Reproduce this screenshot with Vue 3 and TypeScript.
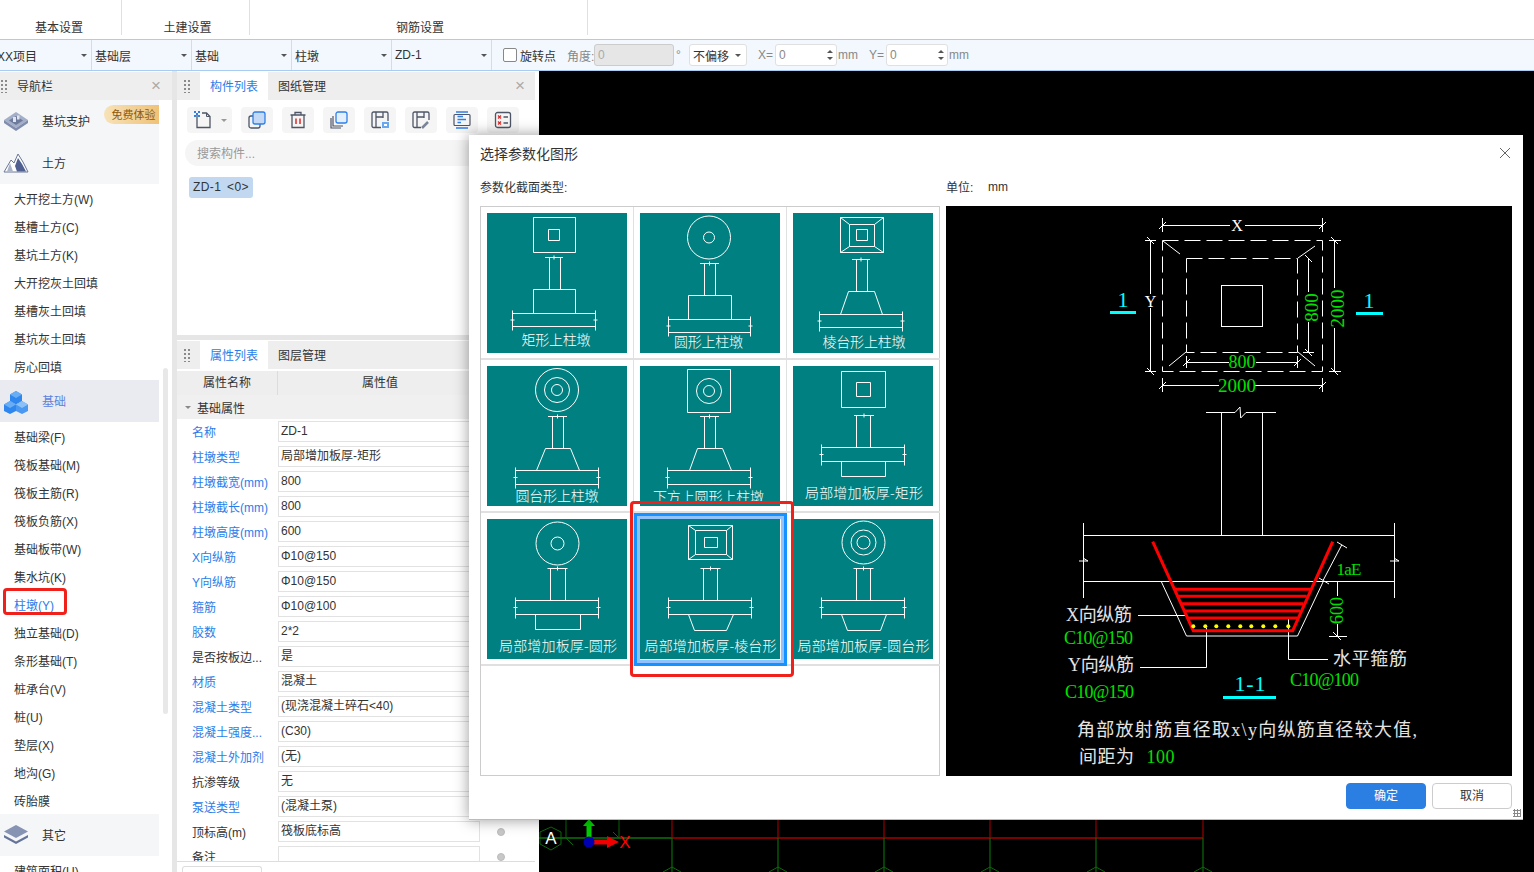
<script setup lang="ts">
interface Thumb {
  label: string
  cx: number
  cy: number
  tw: number
  d: string
  circles: { x: number; y: number; r: number }[]
  cover?: boolean
}

const rect = (x1: number, y1: number, x2: number, y2: number) => `M${x1} ${y1}H${x2}V${y2}H${x1}Z`
const stem = (y: number, tx1: number, tx2: number, c1: number, c2: number, yb: number) =>
  `M${tx1} ${y}H${tx2}M${(tx1 + tx2) / 2} ${y - 2}V${y + 2}M${c1} ${y}V${yb}M${c2} ${y}V${yb}`
const plate = (x1: number, x2: number, y1: number, y2: number) =>
  `${rect(x1, y1, x2, y2)}M${x1} ${y1 - 3}V${y2 + 4}M${x2} ${y1 - 3}V${y2 + 4}M${x1 - 2} ${(y1 + y2) / 2}H${x1 + 2}M${x2 - 2} ${(y1 + y2) / 2}H${x2 + 2}`
const trap = (a: number, b: number, y1: number, c: number, d: number, y2: number) =>
  `M${a} ${y1}H${b}L${d} ${y2}H${c}Z`
const frustum = (x1: number, y1: number, x2: number, y2: number, a: number, b: number, c: number, e: number, ix1: number, iy1: number, ix2: number, iy2: number) =>
  `${rect(x1, y1, x2, y2)}${rect(a, b, c, e)}${rect(ix1, iy1, ix2, iy2)}M${x1} ${y1}L${a} ${b}M${x2} ${y1}L${c} ${b}M${x1} ${y2}L${a} ${e}M${x2} ${y2}L${c} ${e}`

const thumbs: Thumb[] = [
  { label: '矩形上柱墩', cx: 69, cy: 126, tw: 69, circles: [],
    d: rect(46.5, 4.5, 88.5, 39.5) + rect(61.5, 16.5, 72.5, 27.5) + stem(44.5, 58, 76, 62.5, 73.5, 76.5) + rect(46.5, 76.5, 88.5, 100.5) + plate(25.5, 108.5, 100.5, 113.5) },
  { label: '圆形上柱墩', cx: 68.5, cy: 128, tw: 69, circles: [{ x: 69, y: 24.5, r: 21.5 }, { x: 69, y: 24.5, r: 5.5 }],
    d: stem(50.5, 60, 79, 64.5, 75.5, 82.5) + rect(48.5, 82.5, 91.5, 106.5) + plate(28.5, 110.5, 106.5, 119.5) },
  { label: '棱台形上柱墩', cx: 71, cy: 128, tw: 83, circles: [],
    d: frustum(47.5, 4.5, 90.5, 39.5, 56.5, 11.5, 81.5, 33.5, 63.5, 16.5, 74.5, 27.5) + stem(46.5, 59, 77, 63.5, 74.5, 78.5) + trap(55.5, 81.5, 78.5, 47.5, 89.5, 101.5) + plate(26.5, 109.5, 101.5, 114.5) },
  { label: '圆台形上柱墩', cx: 70, cy: 129, tw: 83, circles: [{ x: 70, y: 24, r: 21.5 }, { x: 70, y: 24, r: 12.5 }, { x: 70, y: 24, r: 5.5 }],
    d: stem(50.5, 61, 80, 65.5, 76.5, 82.5) + trap(58.5, 83.5, 82.5, 49.5, 92.5, 104.5) + plate(28.5, 111.5, 104.5, 118.5) },
  { label: '下方上圆形上柱墩', cx: 68.5, cy: 129.5, tw: 111, cover: true, circles: [{ x: 69, y: 25, r: 12.5 }, { x: 69, y: 25, r: 5.5 }],
    d: rect(47.5, 3.5, 90.5, 46.5) + stem(50.5, 60, 79, 64.5, 75.5, 82.5) + trap(57.5, 82.5, 82.5, 49.5, 91.5, 104.5) + plate(27.5, 110.5, 104.5, 118.5) },
  { label: '局部增加板厚-矩形', cx: 71, cy: 125.5, tw: 118, circles: [],
    d: rect(48.5, 5.5, 92.5, 41.5) + rect(63.5, 16.5, 77.5, 30.5) + stem(49.5, 61, 81, 63.5, 77.5, 81.5) + plate(28.5, 111.5, 81.5, 95.5) + rect(48.5, 95.5, 92.5, 110.5) },
  { label: '局部增加板厚-圆形', cx: 71, cy: 125.5, tw: 118, circles: [{ x: 70.5, y: 24.5, r: 21.5 }, { x: 70.5, y: 24.5, r: 6.5 }],
    d: stem(49.5, 60.5, 80.5, 63.5, 78.5, 81.5) + plate(28.5, 111.5, 81.5, 95.5) + rect(48.5, 95.5, 93.5, 110.5) },
  { label: '局部增加板厚-棱台形', cx: 70.5, cy: 125.5, tw: 132, circles: [],
    d: frustum(48.5, 6.5, 92.5, 40.5, 55.5, 11.5, 86.5, 35.5, 64.5, 18.5, 77.5, 28.5) + stem(49.5, 60.5, 80.5, 63.5, 77.5, 81.5) + plate(28.5, 111.5, 81.5, 95.5) + `M48.5 95.5L54.5 111.5H86.5L93.5 95.5` },
  { label: '局部增加板厚-圆台形', cx: 70.5, cy: 125.5, tw: 132, circles: [{ x: 70.5, y: 23.5, r: 21.5 }, { x: 70.5, y: 23.5, r: 12.5 }, { x: 70.5, y: 23.5, r: 6.5 }],
    d: stem(49.5, 60.5, 80.5, 63.5, 77.5, 81.5) + plate(28.5, 111.5, 81.5, 95.5) + `M48.5 95.5L54.5 111.5H87.5L93.5 95.5` },
]

const selects = ['XX项目', '基础层', '基础', '柱墩', 'ZD-1']
const items1 = ['大开挖土方(W)', '基槽土方(C)', '基坑土方(K)', '大开挖灰土回填', '基槽灰土回填', '基坑灰土回填', '房心回填']
const items2 = ['基础梁(F)', '筏板基础(M)', '筏板主筋(R)', '筏板负筋(X)', '基础板带(W)', '集水坑(K)', '柱墩(Y)', '独立基础(D)', '条形基础(T)', '桩承台(V)', '桩(U)', '垫层(X)', '地沟(G)', '砖胎膜']

const props: { k: string; v: string; blue: boolean }[] = [
  { k: '名称', v: 'ZD-1', blue: true },
  { k: '柱墩类型', v: '局部增加板厚-矩形', blue: true },
  { k: '柱墩截宽(mm)', v: '800', blue: true },
  { k: '柱墩截长(mm)', v: '800', blue: true },
  { k: '柱墩高度(mm)', v: '600', blue: true },
  { k: 'X向纵筋', v: 'Φ10@150', blue: true },
  { k: 'Y向纵筋', v: 'Φ10@150', blue: true },
  { k: '箍筋', v: 'Φ10@100', blue: true },
  { k: '胶数', v: '2*2', blue: true },
  { k: '是否按板边...', v: '是', blue: false },
  { k: '材质', v: '混凝土', blue: true },
  { k: '混凝土类型', v: '(现浇混凝土碎石<40)', blue: true },
  { k: '混凝土强度...', v: '(C30)', blue: true },
  { k: '混凝土外加剂', v: '(无)', blue: true },
  { k: '抗渗等级', v: '无', blue: false },
  { k: '泵送类型', v: '(混凝土泵)', blue: true },
  { k: '顶标高(m)', v: '筏板底标高', blue: false },
  { k: '备注', v: '', blue: false },
]

const gridX = [672, 778, 884, 990, 1096, 1203]
const dots = [1193.3, 1205.3, 1216.3, 1228.3, 1240.3, 1251.3, 1263.3, 1275.3, 1288.3]
const bars: [number, number, number][] = [
  [589.3, 1175, 1310], [596.3, 1178.3, 1306.7], [603.7, 1181.7, 1303.3], [611, 1185, 1300], [618, 1187.7, 1297.3],
]
</script>

<template>
  <div class="app">
    <div class="ribbon">
      <div class="rib w1">基本设置</div>
      <div class="rib w2">土建设置</div>
      <div class="rib w3">钢筋设置</div>
    </div>

    <div class="toolbar">
      <div v-for="s in selects" :key="s" class="sel">
        <span>{{ s }}</span><i class="caret"></i>
      </div>
      <span class="check"></span>
      <span class="t-dark lb1">旋转点</span>
      <span class="t-gray lb2">角度:</span>
      <span class="field disabled">0</span>
      <span class="t-gray deg">°</span>
      <span class="offset">不偏移<i class="caret"></i></span>
      <span class="t-gray lb3">X=</span>
      <span class="field num">0<span class="spin"><i class="up"></i><i class="dn"></i></span></span>
      <span class="t-gray mm">mm</span>
      <span class="t-gray lb4">Y=</span>
      <span class="field num">0<span class="spin"><i class="up"></i><i class="dn"></i></span></span>
      <span class="t-gray mm">mm</span>
    </div>

    <div class="main">
      <aside class="nav">
        <div class="head">
          <span class="grip small"></span>
          <span class="nav-title">导航栏</span>
          <span class="x">×</span>
        </div>
        <div class="nav-body">
          <div class="sec plain">
            <div class="sec-row">
              <svg class="sec-icon" width="26" height="22" viewBox="0 0 26 22">
                <path d="M13 2L25 10L13 18L1 10Z" fill="#a3aec8" />
                <path d="M1 10V13L13 21V18ZM25 10V13L13 21V18Z" fill="#7f8cac" />
                <path d="M13 6L20 10.500L13 15L6 10.500Z" fill="#6d7a9c" />
                <path d="M10 7h3v5h-3zM14 5.500h2.500v4H14z" fill="#dfe4ee" />
              </svg>
              <span>基坑支护</span>
              <span class="badge">免费体验</span>
            </div>
            <div class="sec-row">
              <svg class="sec-icon" width="26" height="22" viewBox="0 0 26 22">
                <path d="M1 20L8 8L11 11L15 2L20 10L25 20Z" fill="#fff" stroke="#6a7698" stroke-width="1" />
                <path d="M15 6L19 12L23 19.500H14L12 14Z" fill="#4f6090" />
                <path d="M7 11L10 19.500H4Z" fill="#aab3c9" />
              </svg>
              <span>土方</span>
            </div>
          </div>
          <div v-for="i in items1" :key="i" class="item">{{ i }}</div>
          <div class="sec active">
            <div class="sec-row">
              <svg class="sec-icon" width="26" height="24" viewBox="0 0 26 24">
                <path d="M13 1L19 4.500V11L13 14.500L7 11V4.500Z" fill="#2f86ee" />
                <path d="M13 1L19 4.500L13 8L7 4.500Z" fill="#69aef5" />
                <path d="M7 11L13 14.500V21L7 24L1 21V14.500Z" fill="#2f86ee" />
                <path d="M7 11L13 14.500L7 18L1 14.500Z" fill="#69aef5" />
                <path d="M19 11L25 14.500V21L19 24L13 21V14.500Z" fill="#4a98f1" />
                <path d="M19 11L25 14.500L19 18L13 14.500Z" fill="#8cc1f8" />
              </svg>
              <span>基础</span>
            </div>
          </div>
          <div v-for="i in items2" :key="i" class="item" :class="{ cur: i === '柱墩(Y)' }">{{ i }}</div>
          <div class="sec plain">
            <div class="sec-row">
              <svg class="sec-icon" width="26" height="22" viewBox="0 0 26 22">
                <path d="M13 1L25 7.500L13 14L1 7.500Z" fill="#8693b3" />
                <path d="M1 11L13 17.500L25 11V13.500L13 20L1 13.500Z" fill="#66749a" />
              </svg>
              <span>其它</span>
            </div>
          </div>
          <div class="item">建筑面积(U)</div>
          <span class="scroll"></span>
          <span class="mark"></span>
        </div>
      </aside>

      <div class="split"></div>

      <section class="mid">
        <div class="panel-top">
          <div class="head">
            <span class="grip"></span>
            <span class="tab on">构件列表</span>
            <span class="tab">图纸管理</span>
            <span class="x x2">×</span>
          </div>
          <div class="tools">
            <span class="tool first">
              <svg width="20" height="20" viewBox="0 0 20 20">
                <path d="M4 5V17.500H17V6.500L13.500 3H9" fill="none" stroke="#4d5566" stroke-width="1.300" />
                <path d="M13.500 3V6.500H17" fill="none" stroke="#4d5566" />
                <path d="M1 1h2v2H1zM3 3h2v2H3zM5 1h2v2H5zM1 5h2v2H1zM5 5h2v2H5z" fill="#2f7fe8" />
              </svg>
              <i class="caret gap"></i>
            </span>
            <span class="tool">
              <svg width="18" height="18" viewBox="0 0 18 18">
                <rect x="1" y="5" width="11" height="12" rx="2" fill="none" stroke="#4d5566" stroke-width="1.300" />
                <rect x="5" y="1" width="12" height="12" rx="2" fill="#c3d9f5" stroke="#2f7fe8" stroke-width="1.300" />
              </svg>
            </span>
            <span class="tool">
              <svg width="18" height="18" viewBox="0 0 18 18">
                <path d="M1.500 4H16.500M6 4V1.500H12V4M3 4V16.500H15V4" fill="none" stroke="#4d5566" stroke-width="1.300" />
                <path d="M7 7.500V13M11 7.500V13" stroke="#e02828" stroke-width="1.500" />
              </svg>
            </span>
            <span class="tool">
              <svg width="18" height="18" viewBox="0 0 18 18">
                <path d="M1 7V17H11M3 5V15H13" fill="none" stroke="#4d5566" stroke-width="1.200" />
                <rect x="6" y="1" width="11" height="11" rx="2" fill="#e3effc" stroke="#2f7fe8" stroke-width="1.300" />
              </svg>
            </span>
            <span class="tool">
              <svg width="18" height="18" viewBox="0 0 18 18">
                <path d="M10 16.500H2.500A1.500 1.500 0 0 1 1 15V2.500A1.500 1.500 0 0 1 2.500 1H15.500A1.500 1.500 0 0 1 17 2.500V10M5 1V16M12 1V7M5 6H12" fill="none" stroke="#4d5566" stroke-width="1.300" />
                <rect x="11" y="11" width="7" height="6" fill="#69a7ee" />
                <rect x="13" y="13" width="3" height="2" fill="#fff" />
              </svg>
            </span>
            <span class="tool">
              <svg width="18" height="18" viewBox="0 0 18 18">
                <path d="M9 16.500H2.500A1.500 1.500 0 0 1 1 15V2.500A1.500 1.500 0 0 1 2.500 1H15.500A1.500 1.500 0 0 1 17 2.500V9M5 1V16M12 1V7M5 6H12" fill="none" stroke="#4d5566" stroke-width="1.300" />
                <path d="M10 17L16 11" stroke="#7b8398" stroke-width="2.500" />
              </svg>
            </span>
            <span class="tool">
              <svg width="18" height="18" viewBox="0 0 18 18">
                <path d="M3 1H15M3 17H15M4.500 5.500H10M4.500 8.500H13M4.500 11.500H8" stroke="#2f7fe8" stroke-width="1.300" fill="none" />
                <rect x="1" y="3.500" width="16" height="11" rx="1" fill="none" stroke="#4d5566" stroke-width="1.200" />
              </svg>
            </span>
            <span class="tool">
              <svg width="18" height="18" viewBox="0 0 18 18">
                <rect x="1.500" y="1.500" width="15" height="15" rx="2" fill="none" stroke="#4d5566" stroke-width="1.300" />
                <path d="M4 4.500L7 7.500M7 4.500L4 7.500M4 10.500L7 13.500M7 10.500L4 13.500" stroke="#e02828" stroke-width="1.200" />
                <path d="M9.500 6H14M9.500 12H14" stroke="#4d5566" stroke-width="1.300" />
              </svg>
            </span>
          </div>
          <div class="search">搜索构件...</div>
          <span class="chip">ZD-1 &lt;0&gt;</span>
        </div>

        <div class="panel-gap"></div>

        <div class="panel-bottom">
          <div class="head">
            <span class="grip"></span>
            <span class="tab on">属性列表</span>
            <span class="tab">图层管理</span>
          </div>
          <div class="th">
            <span class="th1">属性名称</span>
            <span class="th2">属性值</span>
          </div>
          <div class="group"><i class="caret"></i>基础属性</div>
          <div class="rows">
            <div v-for="p in props" :key="p.k" class="row">
              <span class="key" :class="{ blue: p.blue }">{{ p.k }}</span>
              <span class="val">{{ p.v }}</span>
              <span class="dot"></span>
            </div>
          </div>
          <div class="foot"><span class="foot-box"></span></div>
        </div>
      </section>

      <div class="canvas">
        <svg width="995" height="801" viewBox="539 71 995 801" class="cv">
          <path d="M539 838H672" stroke="#0a550a" stroke-width="2" />
          <path d="M672 838H1203" stroke="#7d0000" stroke-width="2" />
          <path d="M566 820V838L573 845M619 820V838L613 832" stroke="#0a6b0a" fill="none" />
          <g v-for="x in gridX" :key="x">
            <path :d="`M${x} 815V838`" stroke="#a00000" stroke-width="1.200" />
            <path :d="`M${x} 838V872`" stroke="#0a6b0a" stroke-width="1.200" />
            <path :d="`M${x - 9} 872L${x} 867L${x + 9} 872`" stroke="#0a6b0a" fill="none" />
          </g>
          <path d="M551 827L561 832V844L551 850L540 844V832Z" fill="none" stroke="#0a6b0a" />
          <text x="551" y="844" class="cv-a">A</text>
          <path d="M589 840V826" stroke="#00d000" stroke-width="5" />
          <path d="M583 826L589 819L595 826Z" fill="#00d000" />
          <path d="M592 842H608" stroke="#f00000" stroke-width="5" />
          <path d="M607 836L619 842L607 848Z" fill="#f00000" />
          <circle cx="589" cy="842" r="5.500" fill="#0000b0" />
          <text x="625" y="848" class="cv-x">X</text>
        </svg>
      </div>
    </div>

    <div class="dialog">
      <div class="d-title">
        <span>选择参数化图形</span>
        <svg width="12" height="12" viewBox="0 0 12 12"><path d="M1 1L11 11M11 1L1 11" stroke="#666" stroke-width="1" /></svg>
      </div>
      <div class="d-labels">
        <span class="dl1">参数化截面类型:</span>
        <span class="dl2">单位:</span>
        <span>mm</span>
      </div>
      <div class="d-body">
        <div class="grid">
          <div v-for="(t, i) in thumbs" :key="t.label" class="cell" :class="{ picked: i === 7 }">
            <svg width="140" height="140" viewBox="0 0 140 140" class="thumb">
              <rect width="140" height="140" fill="#008080" />
              <path :d="t.d" fill="none" stroke="#fff" stroke-width="1" />
              <circle v-for="(c, n) in t.circles" :key="n" :cx="c.x" :cy="c.y" :r="c.r" fill="none" stroke="#fff" />
              <text :x="t.cx" :y="t.cy" :textLength="t.tw" class="thumb-t">{{ t.label }}</text>
              <rect v-if="t.cover" x="0" y="135" width="140" height="5" fill="#008080" />
            </svg>
          </div>
          <span class="red"></span>
        </div>
        <div class="cad">
          <svg width="566" height="570" viewBox="946 206 566 570">
            <g fill="none" stroke="#fff" stroke-width="1">
              <path d="M1162.500 225.500H1230M1245 225.500H1322.500M1162.500 218V232M1322.500 218V232M1159 229L1166 222M1319 229L1326 222" />
              <rect x="1162.500" y="240.500" width="160" height="131" stroke-dasharray="16 6" />
              <rect x="1186.500" y="258.500" width="111" height="94" stroke-dasharray="16 6" />
              <path d="M1163 241L1180 254M1298 258L1315 246M1186 352L1169 366M1298 352L1315 366" />
              <rect x="1221.500" y="285.500" width="41" height="41" />
              <path d="M1150.500 240V294M1150.500 308V371M1145 240.500H1156M1145 371.500H1156M1147 237L1154 244M1147 368L1154 375" />
              <path d="M1334.500 240V288M1334.500 328V371M1329 240.500H1341M1329 371.500H1341M1331 237L1338 244M1331 368L1338 375" />
              <path d="M1308.500 258V292M1308.500 322V352M1303 352.500H1314M1305 349L1312 356M1305 255L1312 262" />
              <path d="M1186.500 362.500H1229M1256 362.500H1297.500M1186.500 356V368M1297.500 356V368M1183 366L1190 359M1294 366L1301 359" />
              <path d="M1162.500 385.500H1219M1255 385.500H1322.500M1162.500 378V392M1322.500 378V392M1159 389L1166 382M1319 389L1326 382" />
              <path d="M1206 412.500H1235L1240 407L1240.700 418L1246 412.500H1276M1221.500 412V535M1262.500 412V535" />
              <path d="M1083.500 535.500H1394.500M1083.500 581.500H1394.500M1083.500 523V598M1394.500 523V598" />
              <path d="M1079 561H1088L1083 558M1390 561H1399L1394 558" />
              <path d="M1161 581L1186.500 636H1297.500L1323.500 581" />
              <path d="M1138 615.500H1186M1140 667.500H1206.500V628M1288.500 619V659.500H1328" />
              <path d="M1341.700 545L1323.300 580M1337 542L1347 548M1319 578L1329 584" />
              <path d="M1337.500 581V596M1337.500 624V636M1333 581.500H1342M1329 636.500H1347M1333 632L1341 640" />
            </g>
            <path d="M1152.700 541.700L1193.300 630.700H1292.700L1332.700 541.700" fill="none" stroke="#f00" stroke-width="3" />
            <path v-for="b in bars" :key="b[0]" :d="`M${b[1]} ${b[0]}H${b[2]}`" stroke="#f00" stroke-width="3" />
            <circle v-for="d in dots" :key="d" :cx="d" cy="626.300" r="2" fill="#ff0" />

            <path d="M1110 312.500H1136M1356 313.500H1383M1223 697.500H1276" stroke="#0ff" stroke-width="3" />
            <text x="1123" y="307" class="c-cy">1</text>
            <text x="1369" y="308" class="c-cy">1</text>
            <text x="1250" y="691" class="c-cy" textLength="31">1-1</text>

            <text x="1237" y="231" class="c-w s16">X</text>
            <text x="1150.500" y="307" class="c-w s16">Y</text>

            <text x="1344" y="308.500" class="c-g s19" transform="rotate(-90 1344 308.500)">2000</text>
            <text x="1318" y="307.500" class="c-g s19" transform="rotate(-90 1318 307.500)">800</text>
            <text x="1242" y="368" class="c-g s18">800</text>
            <text x="1237" y="391.500" class="c-g s19">2000</text>
            <text x="1349" y="575" class="c-g s17" textLength="25">1aE</text>
            <text x="1343" y="610.500" class="c-g s18" transform="rotate(-90 1343 610.500)">600</text>

            <text x="1099" y="621" class="c-l" textLength="66">X向纵筋</text>
            <text x="1098.500" y="644" class="c-g s18" textLength="69">C10@150</text>
            <text x="1101" y="671" class="c-l" textLength="66">Y向纵筋</text>
            <text x="1099.500" y="698" class="c-g s18" textLength="69">C10@150</text>
            <text x="1370" y="665" class="c-l" textLength="74">水平箍筋</text>
            <text x="1324.500" y="686" class="c-g s18" textLength="69">C10@100</text>
            <text x="1247" y="736" class="c-l" textLength="340">角部放射筋直径取x\y向纵筋直径较大值,</text>
            <text x="1106.500" y="763" class="c-l" textLength="55">间距为</text>
            <text x="1160.500" y="763" class="c-g s18" textLength="28">100</text>
          </svg>
        </div>
      </div>
      <div class="d-foot">
        <span class="btn ok">确定</span>
        <span class="btn">取消</span>
      </div>
      <span class="resize"></span>
    </div>
  </div>
</template>

<style>
html, body { margin: 0; background: #fff; overflow: hidden; }
</style>

<style scoped>
.app { position: relative; width: 1534px; height: 872px; overflow: hidden; background: #fff; color: #333; font: 12px "Liberation Sans", "Noto Sans CJK SC", sans-serif; }

.ribbon { display: flex; height: 39px; box-sizing: border-box; padding-bottom: 4px; }
.rib { box-sizing: border-box; height: 35px; padding-top: 20px; line-height: 16px; text-align: center; border-right: 1px solid #e0e0e0; }
.w1 { width: 122px; padding-right: 3px; }
.w2 { width: 128px; padding-left: 4px; }
.w3 { width: 338px; padding-left: 3px; }

.toolbar { display: flex; align-items: center; height: 32px; box-sizing: border-box; margin-left: -8px; background: #f2f8fd; border-top: 1px solid #a8cdf2; border-bottom: 1px solid #a8cdf2; white-space: nowrap; }
.sel { display: flex; align-items: center; justify-content: space-between; box-sizing: border-box; width: 100px; height: 30px; padding: 0 4px 0 3px; border-right: 1px solid #d5dce3; flex: none; }
.sel:first-child { padding-left: 5px; }
.caret { display: inline-block; width: 0; height: 0; border-left: 3px solid transparent; border-right: 3px solid transparent; border-top: 3px solid #555; }
.check { box-sizing: border-box; width: 14px; height: 14px; margin-left: 11px; background: #fff; border: 1px solid #888; border-radius: 2px; flex: none; }
.t-dark { color: #333; }
.t-gray { color: #888; flex: none; }
.lb1 { margin-left: 3px; }
.lb2 { margin-left: 11px; width: 27px; white-space: nowrap; overflow: visible; }
.field { display: flex; align-items: center; justify-content: space-between; box-sizing: border-box; height: 22px; padding: 0 3px; background: #fff; border: 1px solid #e0e0e0; border-radius: 3px; color: #888; flex: none; }
.disabled { width: 80px; background: #e6e6e6; border-color: #ccc; color: #aaa; }
.deg { margin-left: 2px; width: 13px; }
.offset { display: flex; align-items: center; justify-content: space-between; box-sizing: border-box; width: 58px; height: 22px; padding: 0 5px 0 3px; background: #fff; border: 1px solid #e0e0e0; border-radius: 3px; color: #333; flex: none; }
.lb3 { margin-left: 11px; width: 17px; }
.lb4 { margin-left: 10px; width: 17px; }
.num { width: 62px; }
.mm { margin-left: 1px; width: 21px; }
.spin { display: flex; flex-direction: column; gap: 4px; }
.up { width: 0; height: 0; border: 3px solid transparent; border-top: 0; border-bottom: 3px solid #555; }
.dn { width: 0; height: 0; border: 3px solid transparent; border-bottom: 0; border-top: 3px solid #555; }

.main { display: flex; height: 801px; }
.nav { width: 172px; padding-top: 1px; box-sizing: border-box; overflow: hidden; background: #fff; }
.head { position: relative; display: flex; align-items: center; height: 28px; background: #eeeeef; }
.grip { width: 8px; height: 14px; margin-left: 6px; margin-right: 9px; background-image: radial-gradient(circle, #8a8a8a 1.100px, transparent 1.400px); background-size: 4px 4px; flex: none; }
.grip.small { margin-left: 0; margin-right: 9px; }
.nav-title { color: #333; margin-bottom: 2px; }
.x { position: absolute; left: 151px; top: 5px; font-size: 17px; line-height: 18px; color: #aaa; }
.x2 { left: 338px; }
.nav-body { position: relative; }
.sec { width: 159px; }
.plain { background: #f5f6f8; }
.active { background: #e9ebf0; color: #5d82dc; }
.sec-row { position: relative; display: flex; align-items: center; height: 42px; padding: 0 0 2px 42px; box-sizing: border-box; }
.sec-icon { position: absolute; left: 3px; top: 10px; }
.badge { position: absolute; left: 104px; top: 5px; box-sizing: border-box; width: 55px; height: 19px; padding-left: 4px; line-height: 20px; text-align: center; font-size: 11px; color: #8a5a10; background: linear-gradient(90deg, #f7e2b9, #efc277); border-radius: 10px 0 0 10px; }
.item { box-sizing: border-box; height: 28px; line-height: 28px; padding: 2px 0 0 14px; color: #333; white-space: nowrap; }
.cur { color: #2b7de9; }
.scroll { position: absolute; left: 163px; top: 268px; width: 5px; height: 346px; background: #e8e8e8; border-radius: 3px; }
.mark { position: absolute; left: 3px; top: 488px; width: 64px; height: 27px; box-sizing: border-box; border: 3px solid #f0201a; border-radius: 4px; }
.split { width: 5px; background: #e6e6e6; }

.mid { width: 362px; padding: 1px 4px 0 0; box-sizing: border-box; display: flex; flex-direction: column; background: #fff; }
.panel-top { position: relative; height: 263px; box-sizing: border-box; }
.tab { display: flex; align-items: center; box-sizing: border-box; height: 28px; padding: 0 10px 2px; color: #333; }
.tab.on { background: #fff; color: #2b7de9; }
.tools { display: flex; gap: 9px; margin: 7px 0 0 10px; height: 26px; }
.tool { display: flex; align-items: center; justify-content: center; width: 32px; height: 26px; background: #f5f5f5; border-radius: 4px; }
.tool.first { width: 45px; justify-content: flex-start; padding-left: 6px; box-sizing: border-box; }
.gap { margin-left: 8px; border-top-color: #999; }
.search { margin: 7px 0 0 8px; height: 26px; line-height: 28px; padding-left: 12px; border-radius: 13px; background: #f5f5f5; color: #999; width: 340px; box-sizing: border-box; }
.chip { display: inline-block; margin: 11px 0 0 12px; width: 64px; height: 21px; line-height: 21px; text-align: center; background: #c1d8f0; border-radius: 3px; color: #333; letter-spacing: 0.4px; word-spacing: 2px; white-space: nowrap; }
.panel-gap { height: 5px; background: #e6e6e6; }
.panel-bottom { flex: 1; overflow: hidden; }
.panel-bottom .head { margin-top: 1px; }
.th { display: flex; height: 24px; margin-top: 2px; background: #eeeeef; align-items: center; line-height: 24px; }
.th1 { width: 100px; height: 24px; text-align: center; border-right: 1px solid #dcdcdc; }
.th2 { width: 204px; height: 24px; text-align: center; }
.group { display: flex; align-items: center; height: 24px; background: #f0f0f0; padding-left: 8px; }
.group .caret { margin-right: 6px; border-top-color: #888; }
.rows { height: 442px; overflow: hidden; border-bottom: 1px solid #ddd; }
.row { display: flex; align-items: center; height: 25px; }
.key { width: 101px; padding-left: 15px; box-sizing: border-box; color: #333; white-space: nowrap; }
.blue { color: #2b7de9; }
.val { box-sizing: border-box; width: 202px; height: 21px; line-height: 19px; padding-left: 2px; background: #fff; border: 1px solid #e2e2e2; color: #333; }
.dot { width: 8px; height: 8px; margin-left: 17px; border-radius: 50%; background: #c8c8c8; border: 1px solid #bbb; box-sizing: border-box; }
.foot { padding: 4px 0 0 5px; }
.foot-box { display: block; width: 80px; height: 20px; border: 1px solid #ddd; border-bottom: 0; box-sizing: border-box; border-radius: 3px 3px 0 0; }

.canvas { flex: 1; background: #000; overflow: hidden; }
.cv { display: block; }
.cv-a { fill: #fff; font: 17px "Liberation Sans", sans-serif; text-anchor: middle; }
.cv-x { fill: #f00; font: 17px "Liberation Sans", sans-serif; text-anchor: middle; }

.dialog { position: absolute; left: 469px; top: 135px; width: 1054px; height: 685px; box-sizing: border-box; padding: 0 11px; background: #fff; box-shadow: 0 0 14px rgba(0, 0, 0, 0.4); border-bottom: 1px solid #bbb; }
.d-title { display: flex; justify-content: space-between; align-items: center; height: 36px; padding-right: 1px; font-size: 14px; }
.d-labels { display: flex; align-items: center; box-sizing: border-box; height: 35px; padding-bottom: 4px; }
.dl1 { width: 466px; }
.dl2 { width: 42px; }
.d-body { display: flex; gap: 6px; }
.grid { position: relative; display: grid; grid-template-columns: repeat(3, 153px); grid-auto-rows: 153px; align-content: start; box-sizing: border-box; width: 460px; height: 570px; border: 1px solid #ccc; }
.cell { box-sizing: border-box; padding: 6px; border-right: 1px solid #e0e0e0; border-bottom: 2px solid #e0e0e0; }
.cell:nth-child(3n) { border-right: 0; }
.picked { box-shadow: inset 0 0 0 3px #1592ff, inset 0 0 0 6px #91c2fb; border: 0; }
.thumb { display: block; }
.thumb-t { fill: #fff; font: 14px "Noto Sans CJK SC", sans-serif; font-weight: 300; text-anchor: middle; dominant-baseline: central; }
.red { position: absolute; left: 149px; top: 294px; width: 164px; height: 176px; box-sizing: border-box; border: 3px solid #f0201a; border-radius: 4px; }
.cad { width: 566px; height: 570px; background: #000; }
.cad svg { display: block; }
.c-cy { fill: #0ff; font: 22px "Liberation Serif", serif; text-anchor: middle; }
.c-w { fill: #fff; text-anchor: middle; font-family: "Liberation Serif", serif; }
.c-g { fill: #00e000; text-anchor: middle; font-family: "Liberation Serif", serif; }
.c-l { fill: #e4e4e4; font: 18px "Liberation Serif", "Noto Sans CJK SC", serif; text-anchor: middle; }
.s16 { font-size: 16px; }
.s17 { font-size: 17px; }
.s18 { font-size: 18px; }
.s19 { font-size: 19px; }
.d-foot { display: flex; justify-content: flex-end; gap: 6px; margin-top: 7px; }
.btn { box-sizing: border-box; width: 80px; height: 26px; line-height: 24px; text-align: center; background: #fff; border: 1px solid #ccc; border-radius: 4px; }
.ok { background: #2b7fe3; border-color: #2b7fe3; color: #fff; }
.resize { position: absolute; right: 2px; bottom: 2px; width: 8px; height: 8px; background-image: radial-gradient(circle, #888 1px, transparent 1.200px); background-size: 3px 3px; }
</style>
